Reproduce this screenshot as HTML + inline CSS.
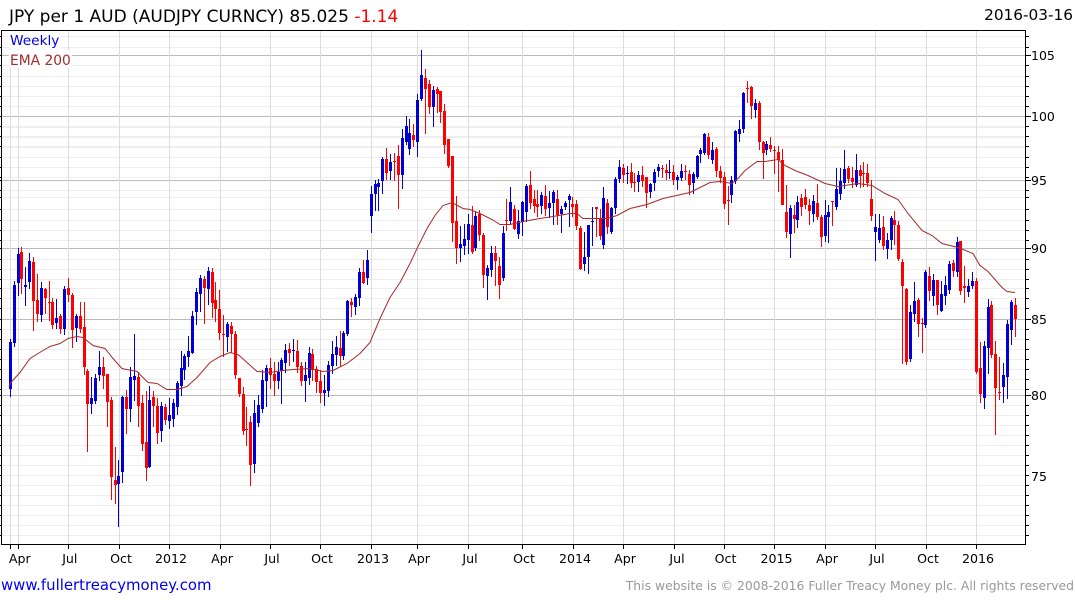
<!DOCTYPE html>
<html>
<head>
<meta charset="utf-8">
<title>JPY per 1 AUD</title>
<style>
html,body{margin:0;padding:0;background:#fff;width:1075px;height:600px;overflow:hidden}
svg{display:block}
text{font-family:"DejaVu Sans",sans-serif}
</style>
</head>
<body>
<svg id="c" xmlns="http://www.w3.org/2000/svg" width="1075" height="600" viewBox="0 0 1075 600">
<rect width="1075" height="600" fill="#fff"/>
<g id="grid" shape-rendering="crispEdges"></g>
<rect x="9" y="31" width="52" height="18" fill="#fff"/>
<rect x="9" y="50" width="63" height="18" fill="#fff"/>
<g id="candles" shape-rendering="crispEdges"></g>
<path id="ema" fill="none" stroke="#a52a2a" stroke-width="1"/>
<g id="axes" shape-rendering="crispEdges"></g>
<text x="9" y="22" font-size="17" fill="#000">JPY per 1 AUD (AUDJPY CURNCY) 85.025 <tspan fill="#f00">-1.14</tspan></text>
<text x="1073" y="20" font-size="15.3" fill="#000" text-anchor="end">2016-03-16</text>
<text x="10" y="45" font-size="13.7" fill="#0000e0">Weekly</text>
<text x="10" y="65" font-size="13.8" fill="#a52a2a">EMA 200</text>
<g font-size="12.5" fill="#000">
<text x="1031" y="60">105</text><text x="1031" y="121">100</text><text x="1031" y="185">95</text><text x="1031" y="253">90</text><text x="1031" y="324">85</text><text x="1031" y="400">80</text><text x="1031" y="481">75</text>
</g>
<g font-size="12.6" fill="#000" text-anchor="middle">
<text x="19.8" y="563">Apr</text><text x="69.8" y="563">Jul</text><text x="121" y="563">Oct</text><text x="171" y="563">2012</text><text x="222" y="563">Apr</text><text x="272" y="563">Jul</text><text x="322" y="563">Oct</text><text x="373" y="563">2013</text><text x="419" y="563">Apr</text><text x="470" y="563">Jul</text><text x="524" y="563">Oct</text><text x="575" y="563">2014</text><text x="625" y="563">Apr</text><text x="677" y="563">Jul</text><text x="725.5" y="563">Oct</text><text x="776.5" y="563">2015</text><text x="827" y="563">Apr</text><text x="877" y="563">Jul</text><text x="928" y="563">Oct</text><text x="978" y="563">2016</text>
</g>
<text x="1" y="590" font-size="14.9" fill="#0000f0">www.fullertreacymoney.com</text>
<text x="1074" y="590" font-size="12.38" fill="#999" text-anchor="end">This website is © 2008-2016 Fuller Treacy Money plc. All rights reserved</text>
</svg>
<script>
var d=[
[0,339,396,342,388],[0,281,346,285,342],[0,248,295,254,282],[1,247,293,252,278],[0,267,305,285,286],
[0,253,288,261,281],[1,257,330,262,300],[1,274,321,300,313],[0,282,321,288,314],[1,288,313,289,297],
[1,281,320,302,302],[1,298,328,302,324],[0,299,328,318,322],[1,314,333,316,328],[0,286,334,289,328],
[1,278,301,288,294],[1,293,347,295,329],[0,314,341,316,327],[1,302,332,316,328],[1,302,374,327,366],
[1,369,451,371,403],[0,377,413,398,403],[0,374,403,378,400],[0,351,380,367,374],[1,357,388,367,375],
[1,374,426,374,401],[1,397,499,400,476],[1,447,503,480,484],[0,460,526,476,483],[0,396,482,397,471],
[1,390,433,397,408],[0,367,421,377,408],[0,334,400,376,379],[1,372,426,377,405],[1,395,450,403,443],
[1,391,480,442,467],[0,386,467,400,466],[1,391,426,397,405],[1,398,443,406,432],[0,402,441,406,430],
[1,404,424,407,419],[0,398,428,415,420],[0,399,426,403,418],[0,381,414,383,406],[0,351,395,368,385],
[0,354,379,356,369],[0,336,366,351,356],[0,311,353,316,352],[0,288,324,292,311],[0,275,311,278,293],
[1,276,323,279,287],[0,267,304,271,288],[1,268,317,272,302],[1,282,321,300,308],[1,290,339,309,332],
[1,315,356,334,334],[0,322,351,324,336],[1,322,352,326,333],[1,331,378,334,374],[1,378,396,378,393],
[1,387,434,394,430],[1,407,445,429,429],[1,416,485,422,464],[0,400,472,413,463],[0,395,426,405,422],
[0,370,412,380,408],[0,365,406,368,380],[1,358,388,368,374],[1,362,395,374,380],[0,362,388,372,380],
[0,358,403,360,370],[0,344,372,350,362],[1,343,365,349,352],[0,339,361,350,350],[1,340,372,351,366],
[1,362,385,366,380],[0,362,401,375,380],[0,347,384,353,377],[1,349,380,354,369],[1,366,392,369,381],
[1,370,402,381,392],[0,375,405,390,392],[0,361,396,365,390],[0,341,373,354,365],[0,336,365,347,354],
[1,331,365,348,355],[0,331,359,333,355],[0,300,335,301,333],[1,298,316,302,304],[0,294,314,297,306],
[0,268,305,272,297],[1,260,283,272,282],[0,250,284,260,277],[0,186,232,194,215],[0,180,210,184,193],
[0,179,210,183,186],[0,157,193,159,180],[1,148,179,159,172],[0,154,179,162,170],[1,153,180,161,161],
[1,145,208,156,174],[0,129,188,138,174],[0,116,144,126,141],[0,119,154,133,148],[1,124,146,135,139],
[0,94,156,100,141],[0,50,100,75,98],[1,69,133,78,88],[1,80,113,84,106],[0,86,126,90,106],
[1,87,112,89,93],[1,91,122,91,111],[1,104,153,111,144],[1,139,167,139,165],[1,156,241,156,222],
[1,196,263,221,247],[0,226,261,244,247],[0,224,254,239,245],[0,214,253,224,239],[1,206,253,225,251],
[0,212,250,216,247],[1,210,240,214,234],[1,233,287,235,274],[0,265,299,268,275],[0,246,276,253,269],
[1,246,285,253,260],[1,257,298,266,284],[0,226,280,233,277],[1,199,230,220,220],[0,187,224,202,220],
[1,205,229,209,228],[0,210,238,221,233],[0,201,235,202,221],[0,184,221,186,211],[1,171,208,185,202],
[1,190,212,199,205],[1,190,216,204,206],[0,192,213,195,205],[1,185,215,196,208],[0,191,217,203,207],
[0,190,224,192,202],[1,190,224,199,214],[0,206,232,209,213],[0,201,209,203,206],[0,194,226,196,199],
[1,197,216,204,206],[1,200,229,204,225],[1,226,269,228,268],[0,232,270,257,263],[0,225,273,225,256],
[0,207,245,221,221],[1,207,236,207,208],[1,209,239,219,235],[0,187,248,198,244],[1,199,233,203,226],
[0,207,233,208,231],[0,177,213,179,207],[0,160,182,167,178],[1,164,182,168,174],[0,166,183,173,173],
[1,163,187,172,182],[1,173,191,182,182],[0,171,191,175,181],[1,166,186,175,180],[1,177,207,177,192],
[0,183,197,184,191],[0,169,190,172,182],[0,164,176,167,170],[1,165,177,168,168],[1,164,179,170,172],
[0,160,178,172,172],[1,165,184,172,179],[0,175,189,177,179],[0,164,180,171,177],[1,165,179,171,171],
[1,170,194,174,184],[0,172,193,174,182],[0,155,178,156,176],[0,148,162,150,153],[0,133,154,134,152],
[1,133,158,137,154],[0,142,163,150,159],[1,147,176,149,170],[1,166,182,171,177],[1,172,208,177,203],
[1,186,224,200,200],[0,176,202,180,194],[0,130,183,131,180],[0,120,141,129,133],[0,92,132,93,128],
[1,81,102,88,88],[1,86,118,87,105],[0,99,117,103,109],[1,101,149,103,141],[1,141,178,142,152],
[0,141,154,144,149],[1,137,151,145,148],[1,146,173,150,150],[1,146,191,152,159],[1,149,204,160,204],
[1,185,237,212,231],[0,205,257,208,233],[1,205,232,215,218],[0,196,227,202,219],[1,194,215,198,206],
[1,189,208,197,204],[1,199,224,205,210],[0,195,221,201,213],[1,184,219,203,216],[1,215,246,217,236],
[0,200,241,215,235],[0,205,242,212,216],[1,201,225,201,201],[0,168,209,189,206],[0,168,199,181,193],
[0,150,188,169,182],[1,166,182,168,178],[1,167,187,178,181],[0,154,186,170,184],[1,165,187,170,175],
[1,162,186,173,173],[1,164,186,173,182],[1,180,220,199,215],[0,214,260,227,231],[0,214,242,228,239],
[1,216,249,227,245],[0,233,258,240,248],[0,216,249,218,239],[1,211,244,220,224],[1,221,260,225,258],
[1,259,363,262,285],[1,288,364,289,361],[0,305,361,312,358],[0,282,321,301,313],[1,298,336,300,323],
[1,318,352,323,323],[0,270,327,272,324],[1,267,300,276,290],[0,274,305,280,295],[1,280,314,280,304],
[0,281,311,294,310],[0,276,304,285,295],[0,261,293,264,289],[1,260,276,263,270],[0,237,276,242,271],
[1,241,294,241,290],[1,266,302,286,287],[0,279,296,286,291],[0,272,288,281,285],[1,278,373,281,371],
[1,342,402,368,393],[0,341,408,346,397],[0,299,373,307,347],[1,301,357,305,354],[1,341,434,354,387],
[1,357,399,392,392],[0,363,402,375,386],[0,320,398,324,376],[0,300,344,302,329],[1,298,336,305,318]
];
var blueW="",blueB="",redW="",redB="";
for(var i=0;i<d.length;i++){
  var e=d[i],x=Math.floor(10.3+3.88*i),w="M"+x+" "+e[1]+"h1V"+(e[2]+1)+"h-1z",b="M"+(x-1)+" "+e[3]+"h3V"+(e[4]+1)+"h-3z";
  if(e[0]){redW+=w;redB+=b}else{blueW+=w;blueB+=b}
}
document.getElementById("candles").innerHTML='<path fill="#0000d6" d="'+blueW+blueB+'"/><path fill="#ff0000" d="'+redW+redB+'"/>';
var em=[[9,386],[10,383],[20,372],[30,358],[43,350],[50,346],[60,343],[68,338],[77,336],[83,337],[93,345],[105,348],[113,358],[122,368],[137,371],[148,382],[157,383],[167,389],[177,389],[187,386],[197,377],[210,362],[220,356],[230,352],[238,354],[247,362],[257,371],[270,372],[283,370],[293,369],[310,368],[323,371],[333,370],[347,363],[360,353],[370,342],[380,318],[390,297],[400,282],[410,263],[417,248],[427,228],[435,215],[443,205],[452,202],[463,208],[470,209],[480,213],[492,219],[500,224],[510,224],[523,221],[540,218],[553,216],[570,213],[577,213],[583,218],[607,218],[617,215],[630,208],[647,204],[663,198],[690,192],[710,182],[720,181],[732,183],[738,178],[745,170],[757,161],[765,161],[778,159],[785,165],[795,170],[808,175],[825,183],[838,186],[858,183],[872,185],[885,193],[898,199],[908,213],[922,230],[932,235],[942,243],[958,247],[973,253],[980,265],[988,271],[1002,287],[1007,291],[1015,292]];
document.getElementById("ema").setAttribute("d","M"+em.map(function(p){return p[0]+" "+(p[1]+.5)}).join("L"));
var minor=[36,47,65,76,86,96,106,126,136,146,157,167,177,190,197,209,220,230,240,259,269,279,288,298,308,329,339,349,359,369,379,389,405,415,425,435,445,455,465,475,485,495,505,515,525,535];
var major=[55,116,180,248,319,395];
var vert=[10,18,68,119,169,220,270,320,371,417,468,522,573,623,674,724,774,825,875,926,976];
var g="",a="";
minor.forEach(function(y){var h=(y==126||y==136||y==146)?2:1;g+='<rect x="2" y="'+y+'" width="1023" height="'+h+'" fill="#eeeeee"/>';
 a+='<rect x="1026" y="'+y+'" width="3" height="1" fill="#000"/><rect x="0" y="'+y+'" width="1" height="1" fill="#000"/>'});
major.forEach(function(y){g+='<rect x="2" y="'+y+'" width="1023" height="1" fill="#bbbbbb"/>';
 a+='<rect x="1026" y="'+y+'" width="5" height="1" fill="#000"/><rect x="0" y="'+y+'" width="1" height="1" fill="#000"/>'});
vert.forEach(function(x){g+='<rect x="'+x+'" y="31" width="1" height="513" fill="#dcdcdc"/>';
 a+='<rect x="'+x+'" y="545" width="1" height="4" fill="#000"/>'});
a+='<rect x="1" y="30" width="1025" height="1" fill="#000"/><rect x="1" y="544" width="1025" height="1" fill="#000"/><rect x="1" y="30" width="1" height="515" fill="#000"/><rect x="1025" y="30" width="1" height="515" fill="#000"/>';
document.getElementById("grid").innerHTML=g;
document.getElementById("axes").innerHTML=a;
</script>
</body>
</html>
